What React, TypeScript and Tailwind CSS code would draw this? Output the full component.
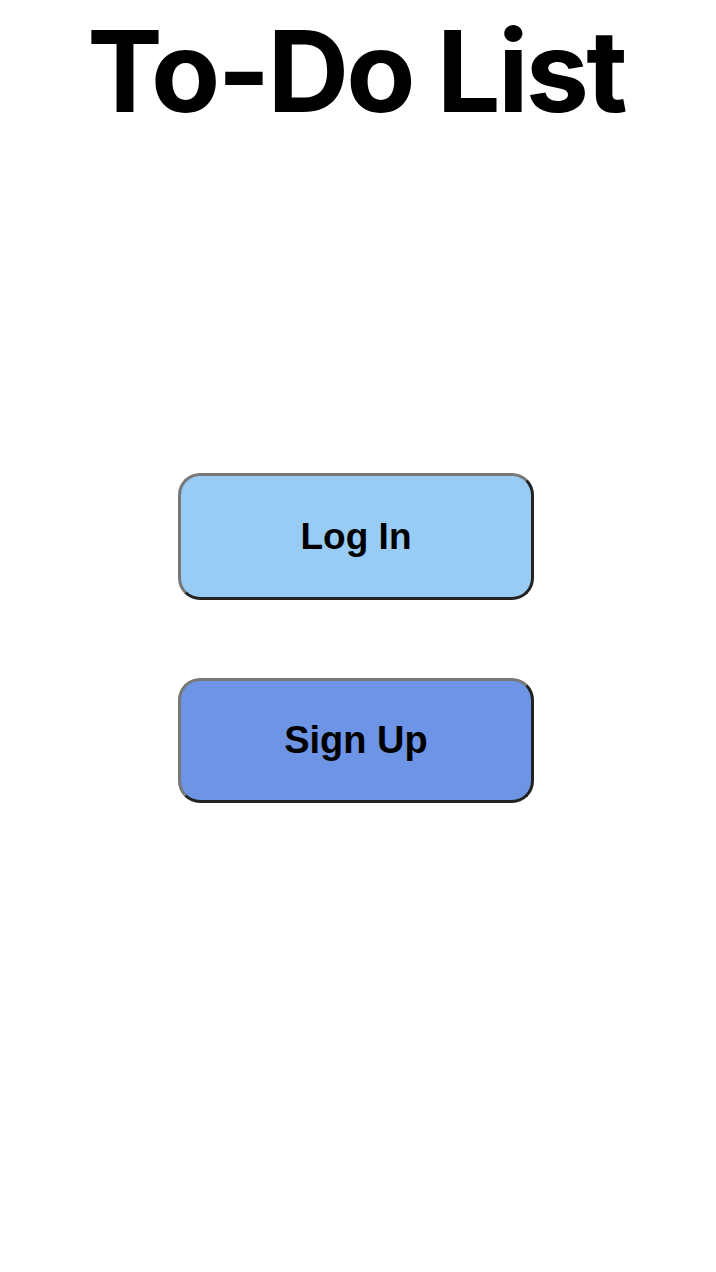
export default function App() {
  return (
    <div className="min-h-[1272px] w-full bg-white flex flex-col items-center" style={{ fontFamily: '"Liberation Sans", Arial, sans-serif' }}>
      <h1 className="mt-[15px] pr-[4px] text-[113px] leading-[113px] font-bold tracking-[-2.8px] text-black whitespace-nowrap" style={{ fontFamily: 'Inter, "Liberation Sans", sans-serif' }}>
        To-Do List
      </h1>
      <div className="mt-[345px] pr-[4px] flex flex-col items-center gap-[78px]">
        <button className="w-[356px] h-[127px] rounded-[22px] bg-[#99ccf5] border-[3px] border-t-[#777777] border-l-[#777777] border-b-[#222222] border-r-[#222222] text-[37px] font-bold text-black">
          Log In
        </button>
        <button className="w-[356px] h-[125px] rounded-[22px] bg-[#6d94e5] border-[3px] border-t-[#777777] border-l-[#777777] border-b-[#222222] border-r-[#222222] text-[38px] font-bold text-black">
          Sign Up
        </button>
      </div>
    </div>
  );
}
